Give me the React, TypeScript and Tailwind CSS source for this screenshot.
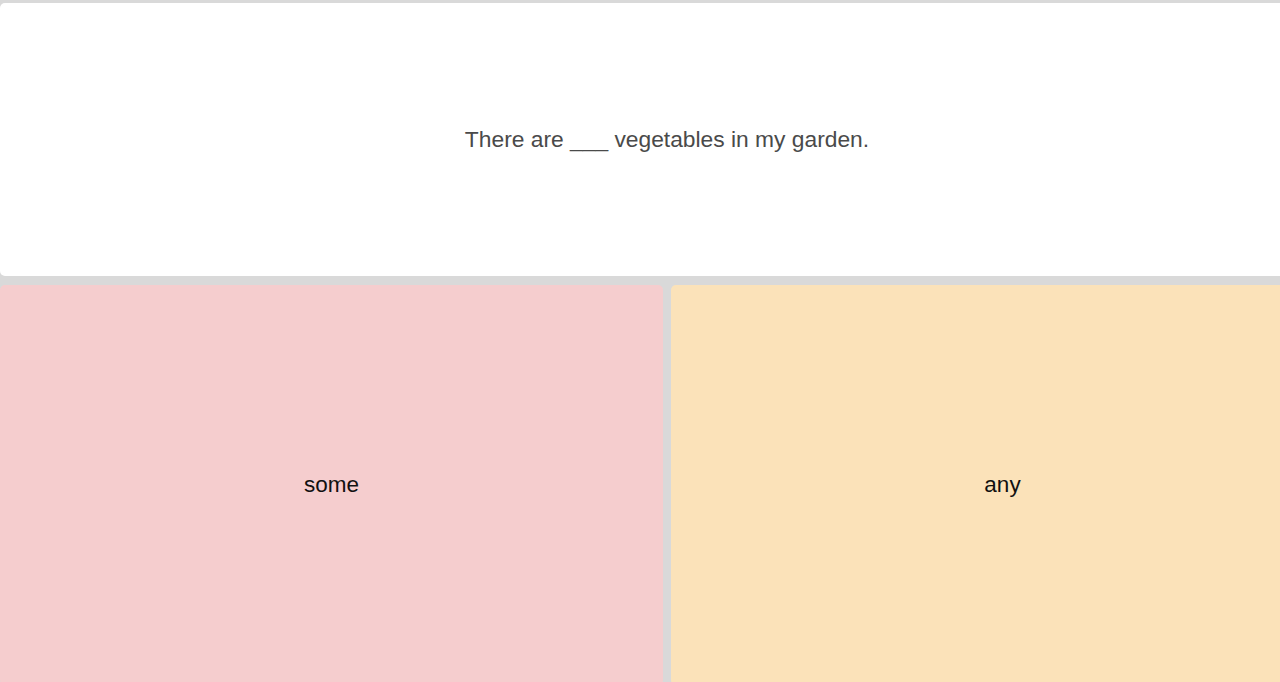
export default function App() {
  return (
    <div className="h-[682px] w-[1280px] overflow-hidden bg-[#d9d9d9] pt-[3px]" style={{ fontFamily: '"Liberation Sans", Arial, sans-serif' }}>
      <div className="flex w-[1334px] flex-col gap-[9px]">
        <div className="flex h-[273px] items-center justify-center rounded-[5px] bg-white">
          <p className="mb-[1px] text-[22.8px] text-[#4a4a4a]">There are ___ vegetables in my garden.</p>
        </div>
        <div className="flex gap-[8px]">
          <div className="flex h-[400px] flex-1 items-center justify-center rounded-[5px] bg-[#f5cdce]">
            <span className="text-[22.5px] text-[#111]">some</span>
          </div>
          <div className="flex h-[400px] flex-1 items-center justify-center rounded-[5px] bg-[#fbe2b9]">
            <span className="text-[22.5px] text-[#111]">any</span>
          </div>
        </div>
      </div>
    </div>
  );
}
